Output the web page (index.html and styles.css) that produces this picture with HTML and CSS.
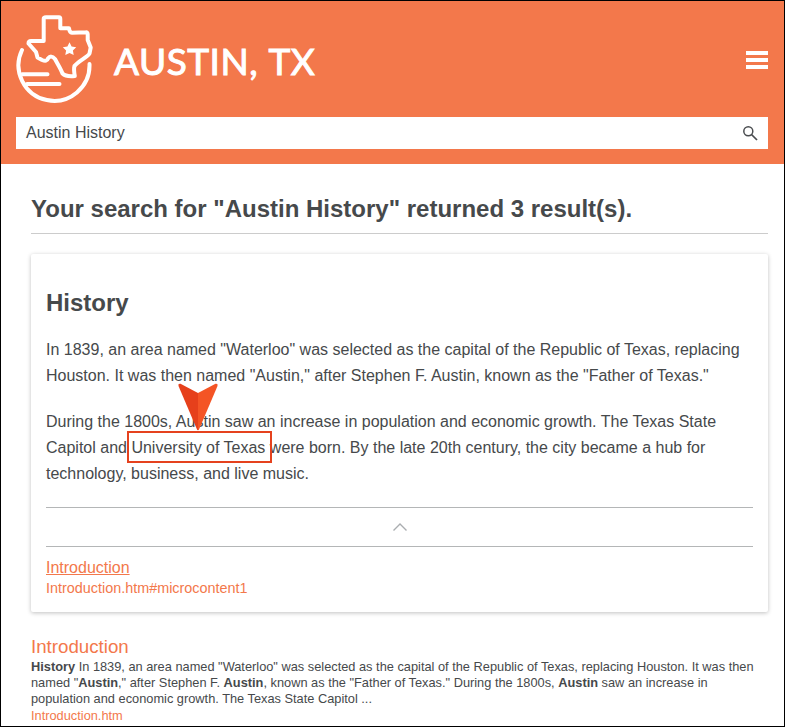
FILE: index.html
```html
<!DOCTYPE html>
<html lang="en">
<head>
<meta charset="utf-8">
<title>Austin, TX</title>
<link rel="stylesheet" href="styles.css">
</head>
<body>
<div class="page">
  <header class="header">
    <div class="brand-row">
      <a class="brand">
        <svg class="logo" width="80" height="90" viewBox="14 13 80 90" fill="none" stroke="#fff" stroke-width="4" stroke-linecap="round" stroke-linejoin="round">
          <path d="M22 50A35.500 35.500 0 1 0 89.500 64"/>
          <path d="M22 74.200H47.500M27 84H59.500"/>
          <path d="M43.700 19Q43.700 17.300 46 17.300H59Q60.300 17.300 60.300 19V28.300H69Q69.500 32.500 72 32.700L86 32.300Q88 32 87.700 36V40L90.700 47.500L89.500 53.500C88 57 78 61 74.500 66Q73.500 69 74.800 76Q66 77 62.500 73.500C60.500 68 57 63 55 59Q51 54.500 48 58.500Q47 62 42 60L37.500 57.500L36 52L28.500 43.500Q28.500 41 31 41H43.700Z"/>
          <path fill="#fff" stroke="none" d="M69.500 42.300L71.600 46.500L76.200 47.200L72.900 50.500L73.700 55.100L69.500 53L65.300 55.100L66.100 50.500L62.800 47.200L67.400 46.500Z"/>
        </svg>
        <span class="brand-name">AUSTIN, TX</span>
      </a>
      <div class="menu"><span></span><span></span><span></span></div>
    </div>
    <div class="search">
      <span>Austin History</span>
      <svg width="16" height="16" viewBox="0 0 16 16" fill="none" stroke="#4a4d50"><circle cx="6.300" cy="6.300" r="4.500" stroke-width="1.500"/><path d="M9.500 9.500L15 15" stroke-width="1.700"/></svg>
    </div>
  </header>
  <main class="content">
    <h1 class="heading">Your search for "Austin History" returned 3 result(s).</h1>
    <section class="card">
      <h2 class="card-title">History</h2>
      <p>In 1839, an area named "Waterloo" was selected as the capital of the Republic of Texas, replacing<br>Houston. It was then named "Austin," after Stephen F. Austin, known as the "Father of Texas."</p>
      <p>During the 1800s, Austin saw an increase in population and economic growth. The Texas State<br>Capitol and <span class="mark">University of Texas<svg class="arrow" width="42" height="48" viewBox="0 0 42 48"><path fill="#e6401b" d="M21 10L3.500 .8Q.7 .3 1.500 3L20 46.500Q20.500 47.500 21 47Z"/><path fill="#f45425" d="M21 10L38.500 .8Q41.300 .3 40.500 3L22 46.500Q21.500 47.500 21 47Z"/></svg></span> were born. By the late 20th century, the city became a hub for<br>technology, business, and live music.</p>
      <div class="toggle"><svg width="16" height="10" viewBox="0 0 16 10" fill="none" stroke="#aaadb0" stroke-width="1.400"><path d="M1.500 8.500L8 2L14.500 8.500"/></svg></div>
      <a class="card-link">Introduction</a>
      <a class="card-url">Introduction.htm#microcontent1</a>
    </section>
    <article class="result">
      <a class="result-title">Introduction</a>
      <p class="excerpt"><b>History</b> In 1839, an area named "Waterloo" was selected as the capital of the Republic of Texas, replacing Houston. It was then<br>named "<b>Austin</b>," after Stephen F. <b>Austin</b>, known as the "Father of Texas." During the 1800s, <b>Austin</b> saw an increase in<br>population and economic growth. The Texas State Capitol ...</p>
      <a class="result-url">Introduction.htm</a>
    </article>
  </main>
</div>
</body>
</html>
```
FILE: styles.css
```css
* { box-sizing: border-box; }
body { margin: 0; font-family: "Liberation Sans", Arial, sans-serif; color: #46494b; font-size: 16px; }
.page { height: 727px; border: 1px solid #000; overflow: hidden; background: #fff; }
.header { height: 163px; padding: 12px 16px 0 15px; background: #f3784b; }
.brand-row { display: flex; justify-content: space-between; align-items: flex-start; height: 104px; }
.brand { display: flex; margin-left: -2px; }
.logo { display: block; }
.brand-name { margin: 25px 0 0 20px; font: 400 37px/46px Lato, sans-serif; letter-spacing: .5px; word-spacing: 1.5px; color: #fff; white-space: nowrap; -webkit-text-stroke: 1px #fff; }
.menu { display: flex; flex-direction: column; gap: 3.5px; width: 22px; margin-top: 38px; }
.menu span { height: 3.5px; background: #fff; }
.search { display: flex; justify-content: space-between; align-items: center; height: 32px; padding: 0 10px; background: #fff; }
.content { padding: 0 16px 0 30px; }
.heading { height: 70px; margin: 0; padding-top: 31px; border-bottom: 1px solid #ccc; font-size: 24px; line-height: 28px; white-space: nowrap; }
.card { height: 358px; margin-top: 20px; padding: 35px 15px 0; border-radius: 2px; box-shadow: 0 1px 4px rgba(0,0,0,.25); }
.card-title { margin: 0; font-size: 24px; line-height: 28px; }
.card p { margin: 20px 0 0; line-height: 26px; white-space: nowrap; }
.mark { position: relative; }
.mark::before { content: ""; position: absolute; inset: -8px -7px -7px -4px; border: 2px solid #e5421e; }
.arrow { position: absolute; left: 46px; top: -56px; }
.toggle { display: flex; justify-content: center; align-items: center; height: 40px; margin-top: 20px; border-top: 1px solid #b4b6b7; border-bottom: 1px solid #b4b6b7; }
.card a { display: block; color: #f3784b; }
.card-link { margin-top: 11px; line-height: 20px; text-decoration: underline; }
.card .card-url { font-size: 14.4px; line-height: 20px; }
.result { margin-top: 24px; }
.result a { display: block; color: #f3784b; }
.result-title { font-size: 18.72px; line-height: 22px; }
.excerpt { margin: 1px 0 0; font-size: 12.8px; line-height: 16px; white-space: nowrap; }
.result .result-url { margin-top: 1px; font-size: 12.8px; line-height: 16px; }
```
